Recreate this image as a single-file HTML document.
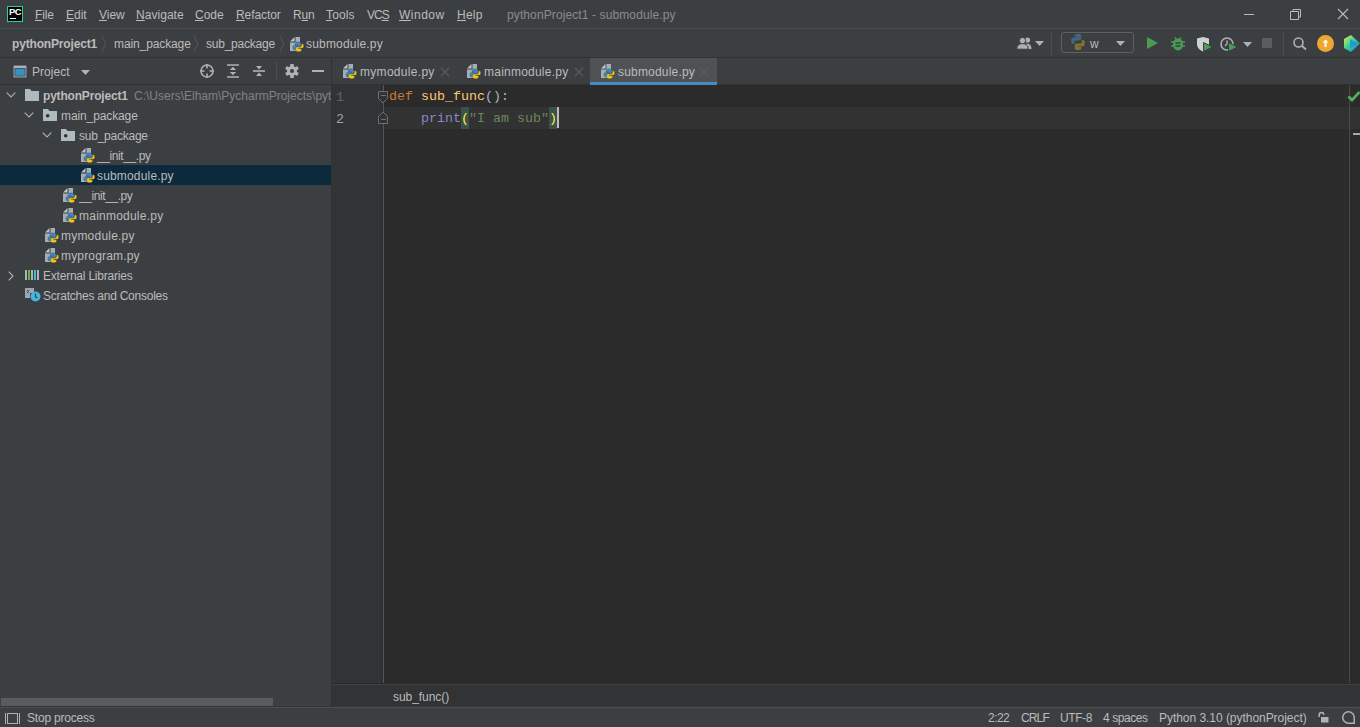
<!DOCTYPE html>
<html><head><meta charset="utf-8">
<style>
*{margin:0;padding:0;box-sizing:border-box}
html,body{width:1360px;height:727px;overflow:hidden;background:#3C3F41;font-family:"Liberation Sans",sans-serif;font-size:12px;color:#BBBBBB}
.a{position:absolute}
.t{position:absolute;white-space:nowrap;line-height:14px}
.u{text-decoration:underline;text-underline-offset:1px;text-decoration-thickness:1px}
.row{position:absolute;left:0;width:331px;height:20px;line-height:20px;white-space:nowrap}
.row span{position:absolute;top:1px}
.mono{font-family:"Liberation Mono",monospace;font-size:13.33px}
svg{position:absolute;overflow:visible}
</style></head><body>
<svg width="0" height="0" style="position:absolute">
<defs>
<symbol id="py" viewBox="0 0 16 16">
  <path d="M1 5.5L5.5 1v4.5z" fill="#B9C3CA"/>
  <path d="M6.5 1H11v14H1V6.5h5.5z" fill="#A3AEB6"/>
  <g transform="translate(1 .8) scale(.93)"><path d="M8.6 5.6c-2 0-3 .7-3 1.9v1.3h3.4v.6H4.9c-1.1 0-1.7.9-1.7 2.3 0 1.5.6 2.3 1.6 2.3h.9v-1.5c0-1 .8-1.8 1.8-1.8h2.9c.8 0 1.5-.7 1.5-1.5V7.5c0-1.1-1.1-1.9-3.3-1.9z" fill="#3E8ACC" stroke="#2B2B2B" stroke-width=".35"/>
  <path d="M9.4 16c2 0 3-.7 3-1.9v-1.3H9v-.6h4.1c1.1 0 1.7-.9 1.7-2.3 0-1.5-.6-2.3-1.6-2.3h-.9v1.5c0 1-.8 1.8-1.8 1.8H7.6c-.8 0-1.5.7-1.5 1.5v1.7c0 1.1 1.1 1.9 3.3 1.9z" fill="#F2C81F" stroke="#2B2B2B" stroke-width=".35"/></g>
</symbol>
<symbol id="fold" viewBox="0 0 14 12">
  <path d="M0 0h5l1.5 2H14v10H0z" fill="#AEB9C0"/>
</symbol>
<symbol id="pkg" viewBox="0 0 14 12">
  <path d="M0 0h5l1.5 2H14v10H0z" fill="#AEB9C0"/>
  <circle cx="4.7" cy="6.8" r="1.8" fill="#2F3133"/>
</symbol>
<symbol id="chd" viewBox="0 0 10 6">
  <path d="M.7.7L5 5 9.3.7" fill="none" stroke="#AFB1B3" stroke-width="1.1"/>
</symbol>
<symbol id="chr" viewBox="0 0 6 10">
  <path d="M.7.7L5 5 .7 9.3" fill="none" stroke="#AFB1B3" stroke-width="1.1"/>
</symbol>
<symbol id="tri" viewBox="0 0 9 5">
  <path d="M0 0h9L4.5 5z" fill="#AFB1B3"/>
</symbol>
</defs>
</svg>

<!-- ===== title bar ===== -->
<div class="a" style="left:0;top:28px;width:1360px;height:1px;background:#4B4D4F"></div>
<div class="a" style="left:7px;top:6px;width:16px;height:16px;background:#000;border:1px solid #21D789"></div>
<div class="a" style="left:9px;top:7px;font-size:9.5px;line-height:9px;font-weight:bold;color:#fff;letter-spacing:-0.6px">PC</div>
<div class="a" style="left:10px;top:18px;width:6px;height:1px;background:#fff"></div>

<div class="t" style="left:35px;top:8px;letter-spacing:-0.16px"><span class="u">F</span>ile</div>
<div class="t" style="left:66px;top:8px"><span class="u">E</span>dit</div>
<div class="t" style="left:99px;top:8px;letter-spacing:-0.03px"><span class="u">V</span>iew</div>
<div class="t" style="left:136px;top:8px;letter-spacing:0.04px"><span class="u">N</span>avigate</div>
<div class="t" style="left:195px;top:8px"><span class="u">C</span>ode</div>
<div class="t" style="left:236px;top:8px;letter-spacing:-0.08px"><span class="u">R</span>efactor</div>
<div class="t" style="left:293px;top:8px;letter-spacing:-0.12px">R<span class="u">u</span>n</div>
<div class="t" style="left:326px;top:8px;letter-spacing:0.14px"><span class="u">T</span>ools</div>
<div class="t" style="left:367px;top:8px;letter-spacing:-1px">VC<span class="u">S</span></div>
<div class="t" style="left:399px;top:8px;letter-spacing:0.5px"><span class="u">W</span>indow</div>
<div class="t" style="left:457px;top:8px;letter-spacing:0.25px"><span class="u">H</span>elp</div>
<div class="t" style="left:507px;top:8px;color:#8B8B8B;letter-spacing:0.11px">pythonProject1 - submodule.py</div>

<!-- window controls -->
<div class="a" style="left:1244px;top:14px;width:10px;height:1px;background:#BBBBBB"></div>
<svg style="left:1290px;top:9px" width="11" height="11"><path d="M3 2.5V.5h7.5V8H8.5M.5 2.5h8v8h-8z" fill="none" stroke="#BBBBBB"/></svg>
<svg style="left:1338px;top:9px" width="10" height="10"><path d="M0 0L10 10M10 0L0 10" stroke="#BBBBBB" stroke-width="1.1"/></svg>

<!-- ===== nav bar ===== -->
<div class="a" style="left:0;top:57px;width:1360px;height:1px;background:#323232"></div>
<div class="t" style="left:12px;top:37px;font-weight:bold;letter-spacing:-0.17px">pythonProject1</div>
<svg style="left:101px;top:35px" width="6" height="17"><path d="M.8 .5L4.8 8.5 .8 16.5" fill="none" stroke="#515355" stroke-width="1.1"/></svg>
<div class="t" style="left:114px;top:37px;letter-spacing:-0.11px">main_package</div>
<svg style="left:193px;top:35px" width="6" height="17"><path d="M.8 .5L4.8 8.5 .8 16.5" fill="none" stroke="#515355" stroke-width="1.1"/></svg>
<div class="t" style="left:206px;top:37px;letter-spacing:-0.23px">sub_package</div>
<svg style="left:279px;top:35px" width="6" height="17"><path d="M.8 .5L4.8 8.5 .8 16.5" fill="none" stroke="#515355" stroke-width="1.1"/></svg>
<svg style="left:289px;top:36px" width="16" height="16"><use href="#py"/></svg>
<div class="t" style="left:306px;top:37px;letter-spacing:0.18px">submodule.py</div>

<!-- ===== project tool header ===== -->
<div class="a" style="left:0;top:84px;width:331px;height:1px;background:#323232"></div>
<svg style="left:13px;top:65px" width="14" height="13"><rect x=".6" y=".6" width="12.8" height="11.8" fill="#AFB1B3"/><rect x="1.5" y="3" width="11" height="8.5" fill="#2C4F63"/><rect x="2.3" y="3.8" width="9.4" height="6.9" fill="#3A8FBE"/></svg>
<div class="t" style="left:32px;top:65px;letter-spacing:0.05px">Project</div>
<svg style="left:81px;top:70px" width="9" height="5"><use href="#tri"/></svg>
<svg style="left:200px;top:64px" width="14" height="14"><circle cx="7" cy="7" r="6" fill="none" stroke="#AFB1B3" stroke-width="1.6"/><path d="M7 0v4.5M7 9.5V14M0 7h4.5M9.5 7H14" stroke="#AFB1B3" stroke-width="1.6"/></svg>
<svg style="left:227px;top:64px" width="12" height="14"><path d="M0 1h12M0 13h12" stroke="#AFB1B3" stroke-width="1.6"/><path d="M6 2.8L9.2 6H2.8zM6 11.2L2.8 8h6.4z" fill="#AFB1B3"/></svg>
<svg style="left:253px;top:64px" width="12" height="14"><path d="M0 7h12" stroke="#AFB1B3" stroke-width="1.6"/><path d="M6 5.5L3 2h6zM6 8.5L9 12H3z" fill="#AFB1B3"/></svg>
<div class="a" style="left:276px;top:61px;width:1px;height:19px;background:#4B4D4F"></div>
<svg style="left:285px;top:64px" width="14" height="14"><g fill="#AFB1B3" transform="translate(7 7)"><circle r="5"/><rect x="-1.8" y="-7" width="3.6" height="14" rx=".6"/><rect x="-1.8" y="-7" width="3.6" height="14" rx=".6" transform="rotate(60)"/><rect x="-1.8" y="-7" width="3.6" height="14" rx=".6" transform="rotate(120)"/></g><circle cx="7" cy="7" r="2" fill="#3C3F41"/></svg>
<div class="a" style="left:312px;top:70px;width:12px;height:2px;background:#AFB1B3"></div>

<!-- ===== tree ===== -->
<div class="row" style="top:85px">
  <svg style="left:6px;top:7px" width="10" height="6"><use href="#chd"/></svg>
  <svg style="left:25px;top:4px" width="14" height="12"><use href="#fold"/></svg>
  <span style="left:43px;font-weight:bold;letter-spacing:-0.19px">pythonProject1</span>
  <span style="left:134px;color:#808284">C:\Users\Elham\PycharmProjects\pyt</span>
</div>
<div class="row" style="top:105px">
  <svg style="left:24px;top:7px" width="10" height="6"><use href="#chd"/></svg>
  <svg style="left:43px;top:4px" width="14" height="12"><use href="#pkg"/></svg>
  <span style="left:61px;letter-spacing:-0.11px">main_package</span>
</div>
<div class="row" style="top:125px">
  <svg style="left:42px;top:7px" width="10" height="6"><use href="#chd"/></svg>
  <svg style="left:61px;top:4px" width="14" height="12"><use href="#pkg"/></svg>
  <span style="left:79px;letter-spacing:-0.24px">sub_package</span>
</div>
<div class="row" style="top:145px">
  <svg style="left:80px;top:2px" width="16" height="16"><use href="#py"/></svg>
  <span style="left:97px;letter-spacing:-0.4px">__init__.py</span>
</div>
<div class="row" style="top:165px;background:#0D293E">
  <svg style="left:80px;top:2px" width="16" height="16"><use href="#py"/></svg>
  <span style="left:97px;letter-spacing:0.17px">submodule.py</span>
</div>
<div class="row" style="top:185px">
  <svg style="left:62px;top:2px" width="16" height="16"><use href="#py"/></svg>
  <span style="left:79px;letter-spacing:-0.42px">__init__.py</span>
</div>
<div class="row" style="top:205px">
  <svg style="left:62px;top:2px" width="16" height="16"><use href="#py"/></svg>
  <span style="left:79px;letter-spacing:0.23px">mainmodule.py</span>
</div>
<div class="row" style="top:225px">
  <svg style="left:44px;top:2px" width="16" height="16"><use href="#py"/></svg>
  <span style="left:61px;letter-spacing:0.21px">mymodule.py</span>
</div>
<div class="row" style="top:245px">
  <svg style="left:44px;top:2px" width="16" height="16"><use href="#py"/></svg>
  <span style="left:61px;letter-spacing:0.17px">myprogram.py</span>
</div>
<div class="row" style="top:265px">
  <svg style="left:8px;top:6px" width="6" height="10"><use href="#chr"/></svg>
  <svg style="left:25px;top:5px" width="15" height="10">
    <rect x="0" y="0" width="2" height="10" fill="#AFB1B3"/><rect x="3" y="0" width="2" height="10" fill="#62B543"/><rect x="6" y="0" width="2" height="10" fill="#AFB1B3"/><rect x="9" y="0" width="2" height="10" fill="#40B6E0"/><rect x="12" y="0" width="2" height="10" fill="#AFB1B3"/>
  </svg>
  <span style="left:43px;letter-spacing:-0.22px">External Libraries</span>
</div>
<div class="row" style="top:285px">
  <svg style="left:25px;top:3px" width="16" height="14">
    <path d="M0 0h9v5H5v5H0z" fill="#9AA7B0"/><path d="M2 2l2 1.5L2 5" fill="none" stroke="#3C3F41" stroke-width="1"/>
    <circle cx="10.5" cy="8.5" r="5" fill="#40B6E0"/><path d="M10.5 5.5v3.5l2 1" fill="none" stroke="#3C3F41" stroke-width="1.2"/>
  </svg>
  <span style="left:43px;letter-spacing:-0.24px">Scratches and Consoles</span>
</div>
<!-- tree h-scrollbar -->
<div class="a" style="left:1px;top:698px;width:272px;height:8px;background:#595B5D"></div>

<!-- ===== tabs ===== -->
<div class="a" style="left:331px;top:58px;width:1px;height:649px;background:#303234"></div>
<div class="a" style="left:332px;top:84px;width:1028px;height:1px;background:#323232"></div>
<svg style="left:342px;top:63px" width="16" height="16"><use href="#py"/></svg>
<div class="t" style="left:360px;top:65px;letter-spacing:0.3px">mymodule.py</div>
<svg style="left:441px;top:68px" width="8" height="8"><path d="M0 0L8 8M8 0L0 8" stroke="#5A5C5E" stroke-width="1.1"/></svg>
<svg style="left:466px;top:63px" width="16" height="16"><use href="#py"/></svg>
<div class="t" style="left:484px;top:65px;letter-spacing:0.23px">mainmodule.py</div>
<svg style="left:575px;top:68px" width="8" height="8"><path d="M0 0L8 8M8 0L0 8" stroke="#5A5C5E" stroke-width="1.1"/></svg>
<div class="a" style="left:590px;top:58px;width:127px;height:24px;background:#4E5254"></div>
<div class="a" style="left:590px;top:82px;width:127px;height:3px;background:#4A88C7"></div>
<svg style="left:600px;top:63px" width="16" height="16"><use href="#py"/></svg>
<div class="t" style="left:618px;top:65px;letter-spacing:0.19px">submodule.py</div>
<svg style="left:700px;top:68px" width="8" height="8"><path d="M0 0L8 8M8 0L0 8" stroke="#5A5C5E" stroke-width="1.1"/></svg>

<!-- ===== editor ===== -->
<div class="a" style="left:332px;top:85px;width:1028px;height:600px;background:#2B2B2B"></div>
<div class="a" style="left:332px;top:85px;width:52px;height:600px;background:#313335"></div>
<div class="a" style="left:384px;top:107px;width:976px;height:22px;background:#323232"></div>
<div class="a" style="left:378px;top:85px;width:1px;height:598px;background:#353739"></div>
<div class="a" style="left:380px;top:85px;width:3px;height:598px;background:#2F3133"></div>
<div class="a" style="left:383px;top:85px;width:1px;height:600px;background:#555555"></div>
<div class="a mono" style="left:332px;top:87px;width:12px;line-height:22px;color:#606366;text-align:right">1</div>
<div class="a mono" style="left:332px;top:109px;width:12px;line-height:22px;color:#A4A3A3;text-align:right">2</div>
<!-- fold markers -->
<svg style="left:378px;top:91px" width="11" height="13"><path d="M.5 .5h9v7l-4.5 4.5-4.5-4.5z" fill="#313335" stroke="#6E6E6E"/><path d="M3 4.5h5" stroke="#6E6E6E"/></svg>
<svg style="left:378px;top:111px" width="11" height="13"><path d="M.5 12.5h9v-7L5 1 .5 5.5z" fill="#313335" stroke="#6E6E6E"/><path d="M3 8.5h5" stroke="#6E6E6E"/></svg>
<div class="a mono" style="left:389px;top:86px;line-height:22px;white-space:pre;color:#A9B7C6"><span style="color:#CC7832">def </span><span style="color:#FFC66D">sub_func</span>():</div>
<div class="a" style="left:461px;top:107px;width:8px;height:22px;background:#3B514D"></div>
<div class="a" style="left:549px;top:107px;width:8px;height:22px;background:#3B514D"></div>
<div class="a mono" style="left:389px;top:108px;line-height:22px;white-space:pre;color:#A9B7C6">    <span style="color:#8888C6">print</span><span style="color:#FFEF28">(</span><span style="color:#6A8759">"I am sub"</span><span style="color:#FFEF28">)</span></div>
<div class="a" style="left:557px;top:107px;width:2px;height:21px;background:#BBBBBB"></div>
<!-- check mark -->
<div class="a" style="left:1345px;top:85px;width:1px;height:599px;background:#2F2F2F"></div>
<div class="a" style="left:1349px;top:85px;width:1px;height:599px;background:#4A4A4A"></div>
<svg style="left:1347px;top:90px" width="14" height="13"><path d="M1.5 6.5l3.5 3.5 7.5-8" fill="none" stroke="#3F8A47" stroke-width="3.2"/><path d="M1.5 6.5l3.5 3.5 7.5-8" fill="none" stroke="#5FB865" stroke-width="1.6"/></svg>
<div class="a" style="left:1353px;top:133px;width:7px;height:2px;background:#A9A9A9"></div>

<!-- editor breadcrumbs -->
<div class="a" style="left:332px;top:685px;width:1028px;height:21px;background:#313335"></div>
<div class="a" style="left:332px;top:683px;width:1028px;height:1px;background:#2A2A2A"></div>
<div class="a" style="left:332px;top:684px;width:1028px;height:1px;background:#3E4042"></div>
<div class="t" style="left:393px;top:690px;letter-spacing:-0.05px">sub_func()</div>

<!-- ===== toolbar right ===== -->
<svg style="left:1017px;top:37px" width="16" height="12"><circle cx="10.5" cy="3" r="2.6" fill="#AFB1B3"/><path d="M6.5 12c0-3.2 1.6-5.2 4-5.2s4 2 4 5.2z" fill="#AFB1B3"/><circle cx="5.5" cy="3.6" r="3.2" fill="#AFB1B3" stroke="#3C3F41" stroke-width="1"/><path d="M-.3 12.2c0-3.6 2.2-5.6 5.8-5.6s5.8 2 5.8 5.6z" fill="#AFB1B3" stroke="#3C3F41" stroke-width="1"/></svg>
<svg style="left:1035px;top:41px" width="9" height="5"><use href="#tri"/></svg>
<div class="a" style="left:1051px;top:32px;width:1px;height:24px;background:#4B4D4F"></div>
<div class="a" style="left:1061px;top:32px;width:73px;height:21px;border:1px solid #5E6060;border-radius:3px"></div>
<svg style="left:1070px;top:34px;opacity:.5" width="16" height="16"><path d="M7.8 0C4.5 0 4.7 1.5 4.7 1.5v1.6h3.2v.5H3.4S1.2 3.4 1.2 6.7s1.9 3.2 1.9 3.2h1.2V8.3s-.1-1.9 1.9-1.9h3.2s1.8 0 1.8-1.8V1.7S11.5 0 7.8 0z" fill="#4B8BBE"/><path d="M8.2 16c3.3 0 3.1-1.5 3.1-1.5v-1.6H8.1v-.5h4.5s2.2.3 2.2-3.1-1.9-3.2-1.9-3.2h-1.2v1.6s.1 1.9-1.9 1.9H6.6s-1.8 0-1.8 1.8v3S4.5 16 8.2 16z" fill="#C9A227"/></svg>
<div class="t" style="left:1090px;top:37px">w</div>
<svg style="left:1116px;top:41px" width="9" height="5"><use href="#tri"/></svg>
<svg style="left:1147px;top:37px" width="11" height="12"><path d="M0 0l11 6-11 6z" fill="#499C54"/></svg>
<svg style="left:1171px;top:36px" width="14" height="15"><path d="M4 1.5l1.5 2M10 1.5l-1.5 2" stroke="#499C54" stroke-width="1.4"/><ellipse cx="7" cy="8.5" rx="5" ry="6" fill="#499C54"/><path d="M0 6h3M11 6h3M0 10h3M11 10h3" stroke="#499C54" stroke-width="1.4"/><path d="M4.5 7h5M4.5 10h5" stroke="#3C3F41" stroke-width="1.4"/></svg>
<svg style="left:1197px;top:37px" width="16" height="15"><path d="M0 1.5L6 0l6 1.5v5.5c0 3.5-2.5 6-6 7.5C2.5 13 0 10.5 0 7z" fill="#CFD1D3"/><path d="M6 0v14.5" stroke="#3C3F41" stroke-width="0"/><path d="M6.5 5.5l9 4.5-9 4.5z" fill="#499C54" stroke="#3C3F41" stroke-width="1"/></svg>
<svg style="left:1220px;top:37px" width="18" height="15"><circle cx="7" cy="7" r="6" fill="none" stroke="#AFB1B3" stroke-width="1.6"/><path d="M7 3.5V7L5 9" stroke="#AFB1B3" stroke-width="1.4" fill="none"/><path d="M8.5 5.5l9 4.5-9 4.5z" fill="#499C54" stroke="#3C3F41" stroke-width="1"/></svg>
<svg style="left:1243px;top:42px" width="9" height="5"><use href="#tri"/></svg>
<div class="a" style="left:1262px;top:38px;width:10px;height:10px;background:#5A5D5F"></div>
<div class="a" style="left:1283px;top:32px;width:1px;height:24px;background:#4B4D4F"></div>
<svg style="left:1293px;top:37px" width="14" height="13"><circle cx="5.5" cy="5.5" r="4.5" fill="none" stroke="#AFB1B3" stroke-width="1.6"/><path d="M8.8 8.8L13 12.5" stroke="#AFB1B3" stroke-width="1.8"/></svg>
<svg style="left:1317px;top:35px" width="17" height="17"><circle cx="8.5" cy="8.5" r="8.5" fill="#F0A732"/><path d="M8.5 4.5l-3 3h2v4.5h2V7.5h2z" fill="#fff"/></svg>
<svg style="left:1344px;top:35px" width="16" height="17"><defs><linearGradient id="g1" x1="0" y1="0" x2="1" y2="1"><stop offset="0" stop-color="#F9E05A"/><stop offset=".45" stop-color="#3BD68A"/><stop offset="1" stop-color="#1B6FE0"/></linearGradient></defs><path d="M0 4L7 0l9 8.5L7 17 0 13z" fill="url(#g1)"/><path d="M6 4l8 4.5L6 13z" fill="#1F8BE8" opacity=".8"/></svg>

<!-- ===== status bar ===== -->
<div class="a" style="left:0;top:706px;width:1360px;height:1px;background:#333537"></div>
<div class="a" style="left:0;top:707px;width:1360px;height:1px;background:#4B4D4F"></div>
<svg style="left:5px;top:713px" width="15" height="11"><path d="M.5 0v11M14.5 0v11" stroke="#AFB1B3"/><rect x="2.5" y=".5" width="10" height="10" fill="none" stroke="#AFB1B3"/></svg>
<div class="t" style="left:27px;top:711px;letter-spacing:-0.2px">Stop process</div>
<div class="t" style="left:988px;top:711px;letter-spacing:-0.54px">2:22</div>
<div class="t" style="left:1021px;top:711px;letter-spacing:-0.86px">CRLF</div>
<div class="t" style="left:1060px;top:711px;letter-spacing:-0.42px">UTF-8</div>
<div class="t" style="left:1103px;top:711px;letter-spacing:-0.42px">4 spaces</div>
<div class="t" style="left:1159px;top:711px;letter-spacing:-0.04px">Python 3.10 (pythonProject)</div>
<svg style="left:1318px;top:711px" width="12" height="12"><path d="M1.2 6V3.8a2.3 2.3 0 0 1 4.6 0" fill="none" stroke="#AFB1B3" stroke-width="1.5"/><rect x="3" y="6" width="7.5" height="5.5" fill="#AFB1B3"/></svg>
<svg style="left:1342px;top:711px" width="13" height="13"><path d="M6.5 .75a5.75 5.75 0 1 0 0 11.5h5.75V6.5A5.75 5.75 0 0 0 6.5 .75z" fill="none" stroke="#AFB1B3" stroke-width="1.5"/></svg>
</body></html>
